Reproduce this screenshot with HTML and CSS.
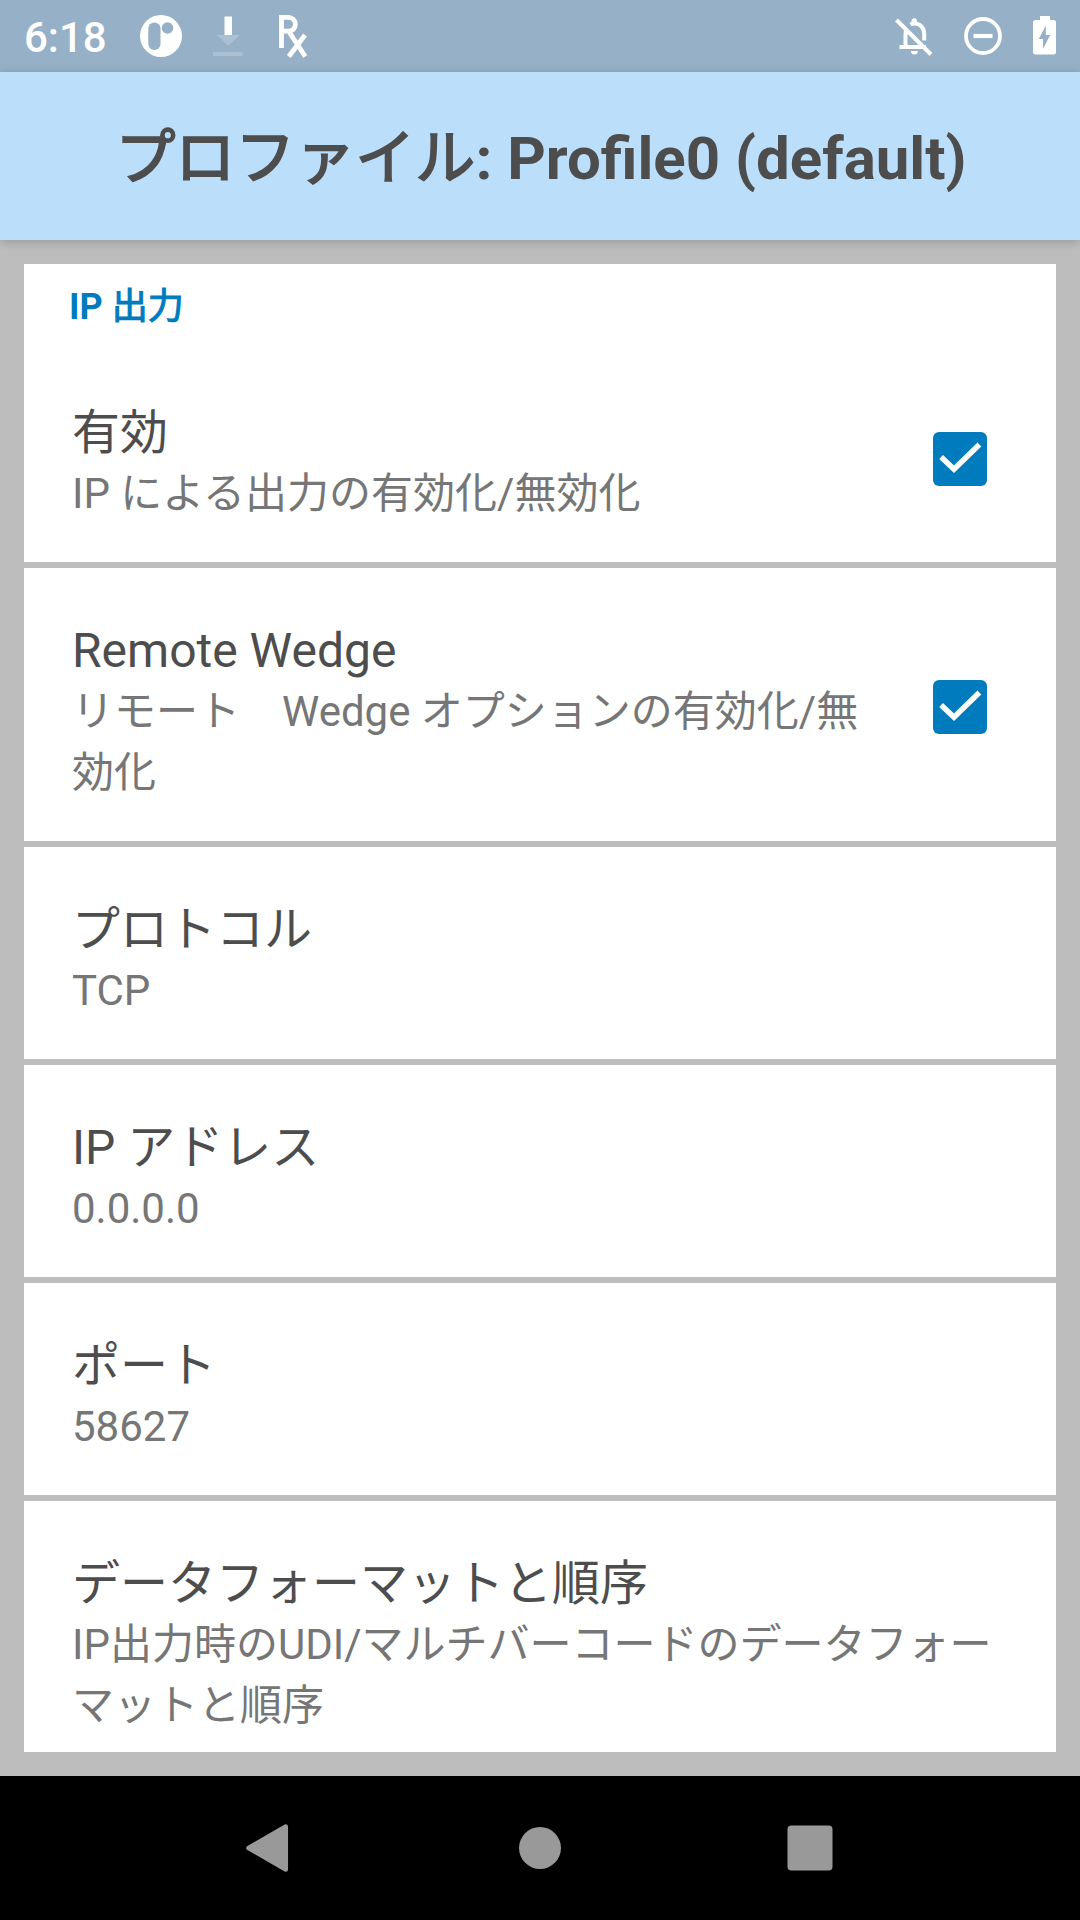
FILE: index.html
```html
<!DOCTYPE html>
<html lang="ja">
<head>
<meta charset="utf-8">
<title>Profile0</title>
<link rel="stylesheet" href="styles.css">
</head>
<body>
<div class="screen">
  <div class="status-bar">
    <span class="clock">6:18</span>
    <svg class="icon-app" width="42" height="42" viewBox="0 0 42 42"><circle cx="21" cy="21" r="21" fill="#fff"/><rect x="8.3" y="7.5" width="12.2" height="27.5" rx="6.1" fill="#96b0c7"/><circle cx="27.5" cy="13" r="5.8" fill="#96b0c7"/></svg>
    <svg class="icon-download" width="30" height="42" viewBox="0 0 30 42"><path d="M11.500 1.500H19V20H11.500z" fill="#fff"/><path d="M4 20H27L15.300 30.700zM0 37H29.500V41H0z" fill="#abc0d2"/></svg>
    <svg class="icon-rx" width="30" height="44" viewBox="0 0 30 44" fill="none" stroke="#fff"><path d="M2.500 34V3.400H9.500a6.900 6.900 0 0 1 0 13.800H3M9.500 17L26.300 42.500" stroke-width="4.800"/><path d="M26 21L9.800 42.500" stroke-width="4.800"/></svg>
    <div class="status-right">
      <svg width="38" height="42" viewBox="0 0 38 42" fill="none" stroke="#fff"><path d="M10.500 32V19.500q0-3 1-5M15.500 9.500q1.800-1.100 4-1.100c5.500 0 9.700 4.500 9.700 10.300V25.500" stroke-width="4"/><path d="M4.500 32H31" stroke-width="4"/><path d="M16.500 8V6a2.700 2.700 0 0 1 5.400 0V8zM16 36H23a3.500 3.500 0 0 1-7 0z" fill="#fff" stroke="none"/><path d="M1.500 5L36 39.500" stroke-width="4"/></svg>
      <svg width="38" height="42" viewBox="0 0 38 42" fill="none" stroke="#fff"><circle cx="19" cy="21" r="17" stroke-width="3.800"/><path d="M9.500 21H28.500" stroke-width="4.200"/></svg>
      <svg width="23" height="42" viewBox="0 0 23 42"><path d="M7 1H17V5H20.500Q23 5 23 7.500V37Q23 39.500 20.500 39.500H2.500Q0 39.500 0 37V7.500Q0 5 2.500 5H7z" fill="#fff"/><path d="M12.800 10.500V20H17.200L10 34V24H5.800z" fill="#96b0c7"/></svg>
    </div>
  </div>
  <header class="app-bar"><h1><span class="kana">プロファイル</span>: Profile0 (default)</h1></header>
  <main class="content">
    <div class="list">
      <h2 class="category">IP <span class="kana">出力</span></h2>
      <div class="row">
        <div class="text"><div class="title">有効</div><div class="summary">IP による出力の有効化/無効化</div></div>
        <svg class="check" width="54" height="54" viewBox="0 0 54 54"><rect width="54" height="54" rx="6" fill="#007cbe"/><path d="M8.100 25L21 37.300L46.400 12.500" fill="none" stroke="#fff" stroke-width="5.400"/></svg>
      </div>
      <div class="row">
        <div class="text"><div class="title">Remote Wedge</div><div class="summary">リモート　Wedge オプションの有効化/無効化</div></div>
        <svg class="check" width="54" height="54" viewBox="0 0 54 54"><rect width="54" height="54" rx="6" fill="#007cbe"/><path d="M8.100 25L21 37.300L46.400 12.500" fill="none" stroke="#fff" stroke-width="5.400"/></svg>
      </div>
      <div class="row"><div class="text"><div class="title">プロトコル</div><div class="summary">TCP</div></div></div>
      <div class="row"><div class="text"><div class="title">IP アドレス</div><div class="summary">0.0.0.0</div></div></div>
      <div class="row"><div class="text"><div class="title">ポート</div><div class="summary">58627</div></div></div>
      <div class="row"><div class="text"><div class="title">データフォーマットと順序</div><div class="summary">IP出力時のUDI/マルチバーコードのデータフォーマットと順序</div></div></div>
    </div>
  </main>
  <nav class="nav-bar">
    <svg width="48" height="48" viewBox="0 0 48 48"><path d="M39.800 2.500V45.500L2.500 24z" fill="#999" stroke="#999" stroke-width="4.500" stroke-linejoin="round"/></svg>
    <svg width="48" height="48" viewBox="0 0 48 48"><circle cx="24" cy="24" r="21" fill="#999"/></svg>
    <svg width="48" height="48" viewBox="0 0 48 48"><rect x="1.500" y="1.500" width="45" height="45" rx="4" fill="#999"/></svg>
  </nav>
</div>
</body>
</html>
```
FILE: styles.css
```css
* { box-sizing: border-box; }
body { margin: 0; font-family: Roboto, "Noto Sans CJK JP", sans-serif; }
svg { display: block; flex: none; }
h1, h2 { margin: 0; }
.screen { width: 1080px; height: 1920px; display: flex; flex-direction: column; overflow: hidden; }
.status-bar { height: 72px; background: #96b0c7; display: flex; align-items: center; padding: 0 24px; color: #fff; }
.clock { width: 116px; font-size: 42px; font-weight: 500; line-height: 70px; padding-top: 4px; }
.icon-download { margin-left: 31px; }
.icon-rx { margin-left: 36px; }
.status-right { margin-left: auto; display: flex; gap: 31px; }
.app-bar { position: relative; z-index: 1; height: 168px; background: #bbdefb; display: flex; justify-content: center; align-items: center; padding: 5px 0 0 2px; box-shadow: 0 2px 10px rgba(0, 0, 0, .2); }
.app-bar h1 { font-size: 60px; font-weight: 700; line-height: 72px; color: #4d4d4d; white-space: nowrap; }
.kana { font-weight: 400; -webkit-text-stroke: .031em currentColor; }
.content { height: 1536px; background: #bdbdbd; padding: 24px; }
.list { height: 1488px; background: #fff; overflow: hidden; }
.category { height: 86px; padding: 22px 0 0 45px; font-size: 36px; line-height: 42px; font-weight: 700; color: #007cbe; }
.row { display: flex; align-items: center; padding: 0 48px; }
.row + .row { border-top: 6px solid #bdbdbd; }
.text { flex: 1; padding: 53px 0 38px; }
.title { font-size: 48px; line-height: 60px; color: #4d4d4d; }
.summary { font-size: 42px; line-height: 61px; color: #767676; }
.check { margin: 5px 21px 0 48px; }
.nav-bar { height: 144px; background: #000; display: flex; justify-content: center; align-items: center; gap: 222px; }
```
